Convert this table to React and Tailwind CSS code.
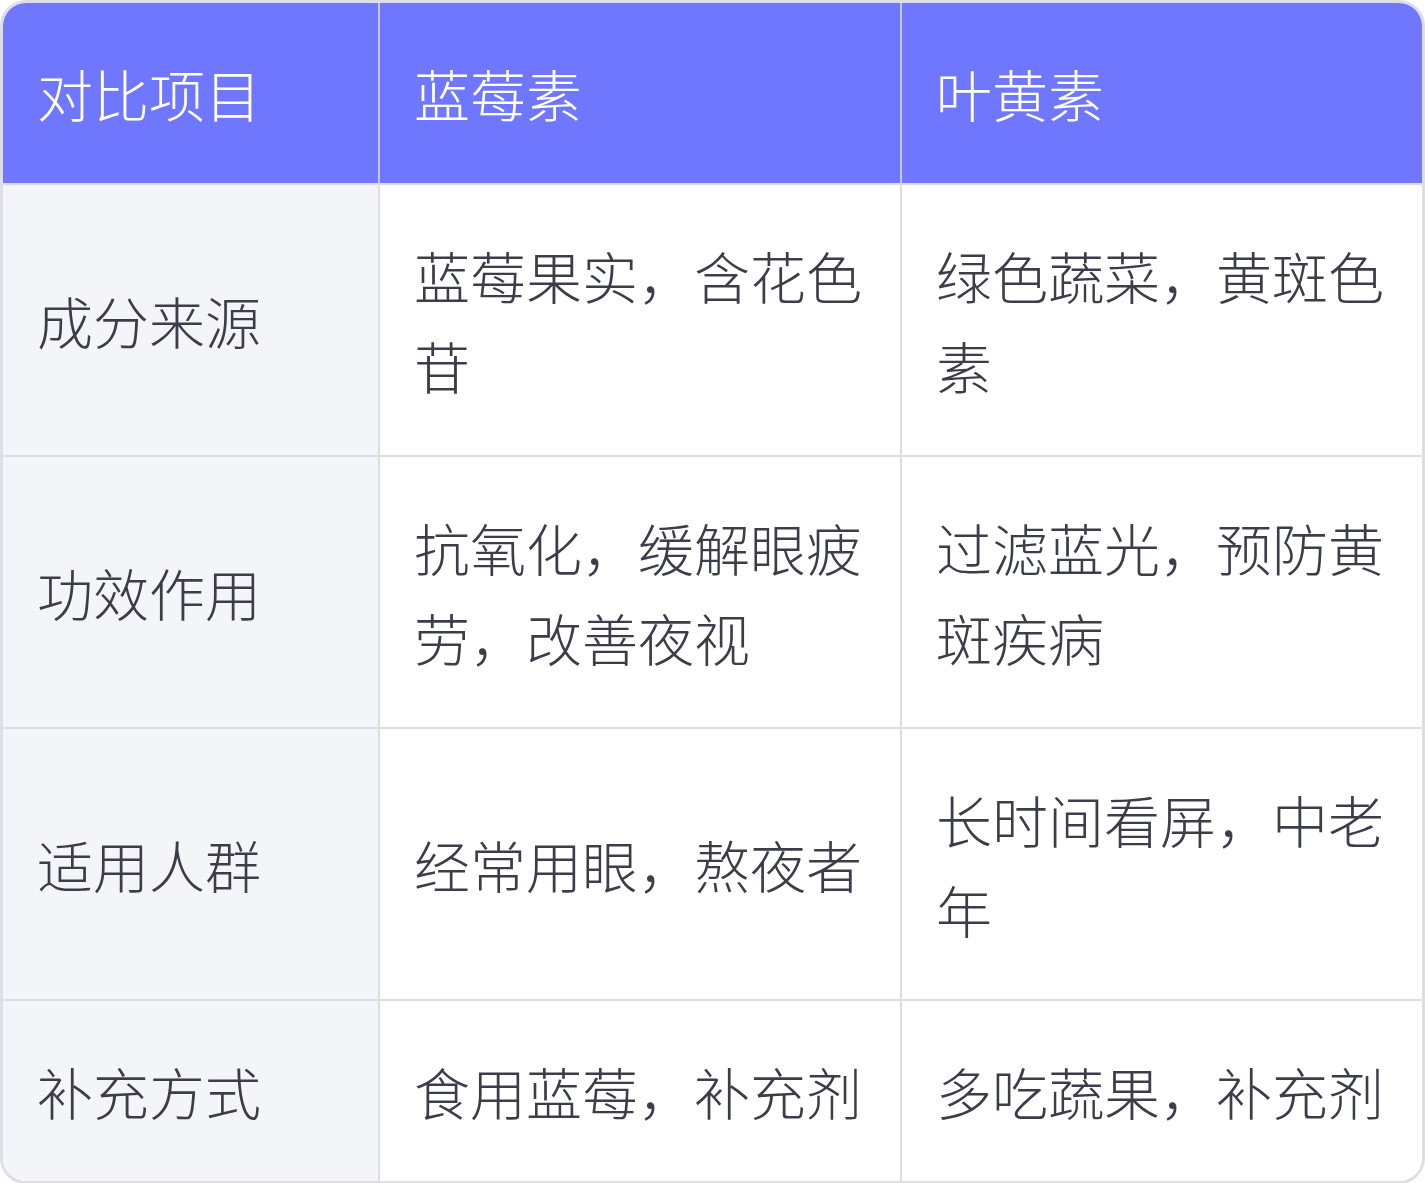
import React from 'react';

const headers = ['对比项目', '蓝莓素', '叶黄素'];

const rows = [
  ['成分来源', '蓝莓果实，含花色苷', '绿色蔬菜，黄斑色素'],
  ['功效作用', '抗氧化，缓解眼疲劳，改善夜视', '过滤蓝光，预防黄斑疾病'],
  ['适用人群', '经常用眼，熬夜者', '长时间看屏，中老年'],
  ['补充方式', '食用蓝莓，补充剂', '多吃蔬果，补充剂'],
];

const App = () => {
  return (
    <div
      className="w-[1425px] h-[1183px] bg-white"
      style={{ fontFamily: '"Noto Sans CJK SC", "Noto Sans", sans-serif' }}
    >
      <div className="border-[3px] border-[#dedee4] rounded-[26px] overflow-hidden">
        <div className="grid grid-cols-[377px_522px_1fr] text-[56px] leading-[90px] font-light text-[#3b3e49]">
          {headers.map((h, i) => (
            <div
              key={h}
              className={`bg-[#7077ff] text-white px-[34px] py-[45px] border-b-2 border-[#dcdce3] ${
                i < 2 ? 'border-r-2 border-r-[#c8caf5]' : ''
              }`}
            >
              {h}
            </div>
          ))}
          {rows.map((row, r) =>
            row.map((cell, c) => (
              <div
                key={`${r}-${c}`}
                className={`flex items-center px-[34px] py-[45px] border-[#dcdce3] ${
                  r < rows.length - 1 ? 'border-b-2' : ''
                } ${c < 2 ? 'border-r-2' : ''} ${c === 0 ? 'bg-[#f4f5f9]' : 'bg-white'}`}
              >
                {cell}
              </div>
            ))
          )}
        </div>
      </div>
    </div>
  );
};

export default App;
